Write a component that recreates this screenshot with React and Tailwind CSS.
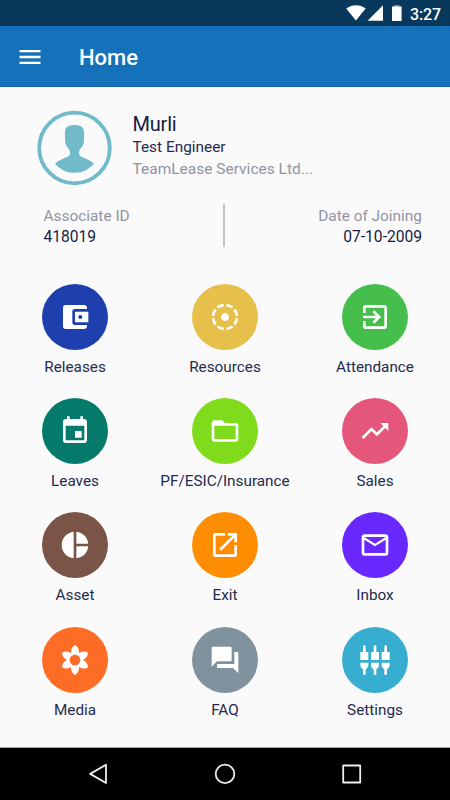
import {
  MdAccountBalanceWallet,
  MdEvent,
  MdExitToApp,
  MdFilterTiltShift,
  MdFilterVintage,
  MdFolderOpen,
  MdMailOutline,
  MdMenu,
  MdOpenInNew,
  MdPieChart,
  MdQuestionAnswer,
  MdSettingsInputComponent,
  MdTrendingUp,
} from "react-icons/md";

const menu = [
  { label: "Releases", icon: MdAccountBalanceWallet, color: "bg-[#1e40af]" },
  { label: "Resources", icon: MdFilterTiltShift, color: "bg-[#e6c04b]" },
  { label: "Attendance", icon: MdExitToApp, color: "bg-[#45be4b]" },
  { label: "Leaves", icon: MdEvent, color: "bg-[#047a6a]" },
  { label: "PF/ESIC/Insurance", icon: MdFolderOpen, color: "bg-[#80db1c]" },
  { label: "Sales", icon: MdTrendingUp, color: "bg-[#e5577a]" },
  { label: "Asset", icon: MdPieChart, color: "bg-[#795447]" },
  { label: "Exit", icon: MdOpenInNew, color: "bg-[#ff8d02]" },
  { label: "Inbox", icon: MdMailOutline, color: "bg-[#6828ff]" },
  { label: "Media", icon: MdFilterVintage, color: "bg-[#ff6c26]" },
  { label: "FAQ", icon: MdQuestionAnswer, color: "bg-[#80929e]" },
  { label: "Settings", icon: MdSettingsInputComponent, color: "bg-[#37aecf]" },
];

function StatusBar() {
  return (
    <div className="flex h-[26px] items-center justify-end bg-[#09385d] pr-[9px] text-white">
      <svg width="56" height="26" viewBox="0 0 56 26" fill="currentColor">
        <path d="M.2 8.500C5.700 4 14.200 4 19.700 8.500L9.900 20.500z" />
        <path d="M37 5.200v15.500H21.500z" />
        <path d="M46 6.500h2.400V5h4.800v1.500h2.400V21H46z" />
        <path d="M48.400 5h4.800v1.500h-4.800z" fill="#7590a5" />
      </svg>
      <span className="ml-[8px] pt-[3px] text-[16px] leading-none font-medium tracking-[-0.1px]">3:27</span>
    </div>
  );
}

function Avatar() {
  return (
    <svg width="76" height="76" viewBox="-0.5 0 76 76" className="text-[#70bac9]">
      <circle cx="38" cy="38" r="35.300" fill="none" stroke="currentColor" strokeWidth="3.800" />
      <path
        fill="currentColor"
        d="M38 15c6.500 0 9.600 2.200 9.600 8l-.3 9.500c-.3 3.500-3 5-4.100 7.500-.9 2-1 3.300-.6 4.600 1.300 3.400 10.500 4.200 14.900 9.200-5 5.700-11.500 9-19.500 9s-14.500-3.300-19.500-9c4.400-5 13.600-5.800 14.900-9.200.4-1.300.3-2.600-.6-4.600-1.100-2.500-3.800-4-4.100-7.500l-.3-9.500c0-5.800 3.100-8 9.600-8z"
      />
    </svg>
  );
}

function Profile() {
  return (
    <section>
      <div className="flex pt-[23px] pl-[36px]">
        <Avatar />
        <div className="ml-[20.5px] pt-[2px]">
          <h2 className="text-[20px] leading-[24px] tracking-[-0.2px] text-[#171b45]">Murli</h2>
          <p className="text-[15.4px] leading-[22px] text-[#252a50]">Test Engineer</p>
          <p className="text-[15.5px] leading-[22px] text-[#9193a3]">TeamLease Services Ltd...</p>
        </div>
      </div>
      <div className="mt-[18px] flex h-[43px] pr-[28px] pl-[43.5px] text-[15.4px] leading-[21px]">
        <div className="w-[179.500px] pt-[2px]">
          <p className="text-[#9193a3]">Associate ID</p>
          <p className="text-[15.600px] text-[#171b45]">418019</p>
        </div>
        <div className="w-[2px] bg-[#c4c4c6]" />
        <div className="flex-1 pt-[2px] text-right">
          <p className="text-[#9193a3]">Date of Joining</p>
          <p className="text-[15.600px] text-[#171b45]">07-10-2009</p>
        </div>
      </div>
    </section>
  );
}

function MenuItem({ item }) {
  const Icon = item.icon;
  return (
    <button className="flex flex-col items-center">
      <span className={`flex size-[66px] items-center justify-center rounded-full text-white ${item.color}`}>
        <Icon size={32} />
      </span>
      <span className="mt-[6px] text-[15.3px] leading-[22px] whitespace-nowrap text-[#252a50]">{item.label}</span>
    </button>
  );
}

function NavBar() {
  return (
    <div className="flex h-[53px] items-center border-t border-[#a5a5a5] bg-black text-[#eeeeee]">
      <svg width="450" height="24" viewBox="0 0 450 24" fill="none" stroke="currentColor" strokeWidth="1.800" strokeLinejoin="round">
        <path d="M106 2.800v18.200L90.200 11.900z" />
        <circle cx="225" cy="11.900" r="9.300" />
        <rect x="343.200" y="3.500" width="17" height="17" />
      </svg>
    </div>
  );
}

export default function App() {
  return (
    <div className="flex h-[800px] w-[450px] flex-col overflow-hidden bg-[#fafafa] font-['Roboto',sans-serif]">
      <StatusBar />
      <header className="flex h-[61px] items-center border-b border-[#0e62a5] bg-[#1571b9] pt-px pl-[16px] text-white">
        <MdMenu size={28} />
        <h1 className="ml-[35px] pt-[2px] text-[22px] font-medium">Home</h1>
      </header>
      <main className="flex-1">
        <Profile />
        <div className="mt-[37px] grid auto-rows-[114.2px] grid-cols-3">
          {menu.map((item) => (
            <MenuItem key={item.label} item={item} />
          ))}
        </div>
      </main>
      <NavBar />
    </div>
  );
}
